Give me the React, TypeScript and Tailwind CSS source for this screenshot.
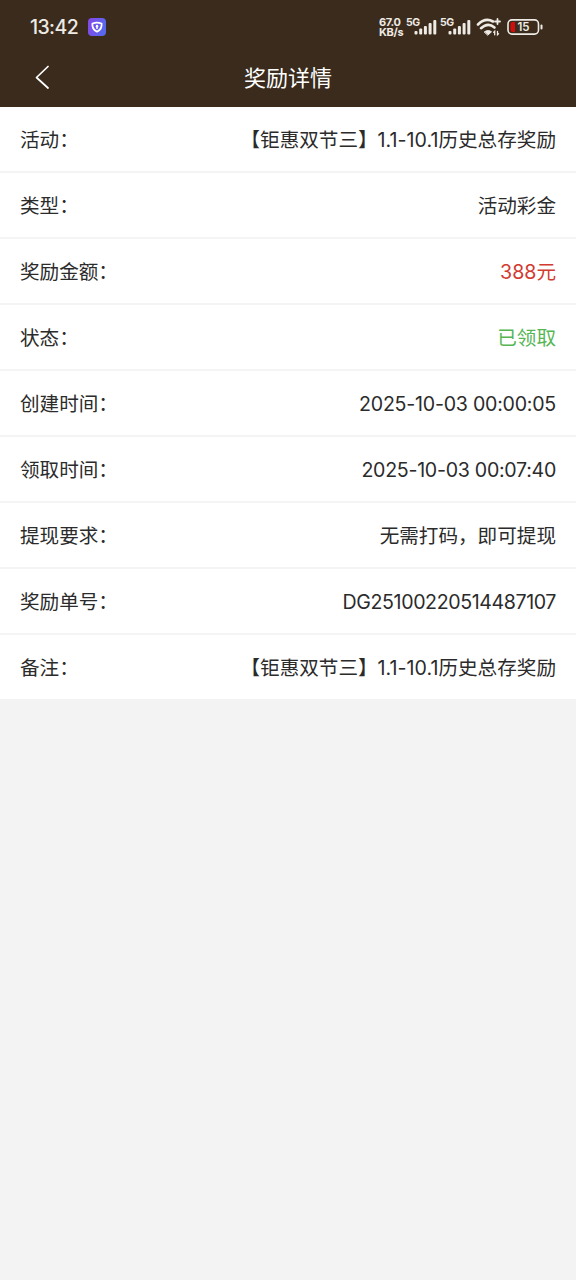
import type { ReactNode } from "react";

type Row = { label: string; value: ReactNode; tone?: string };

const promo = (
  <>
    【钜惠双节三】<span className="tracking-[0.02px]">1.1-10.1</span>历史总存奖励
  </>
);

const rows: Row[] = [
  { label: "活动：", value: promo },
  { label: "类型：", value: "活动彩金" },
  { label: "奖励金额：", value: "388元", tone: "text-[#d33a30]" },
  { label: "状态：", value: "已领取", tone: "text-[#56b654]" },
  { label: "创建时间：", value: <span className="tracking-[-0.24px]">2025-10-03 00:00:05</span> },
  { label: "领取时间：", value: <span className="tracking-[-0.28px]">2025-10-03 00:07:40</span> },
  { label: "提现要求：", value: "无需打码，即可提现" },
  { label: "奖励单号：", value: <span className="tracking-[-0.4px]">DG25100220514487107</span> },
  { label: "备注：", value: promo },
];

function Signal() {
  return (
    <svg className="h-4 w-6" viewBox="0 0 24 16" fill="#eeeae4">
      <rect x="0.5" y="12" width="3" height="3.5" rx="1" />
      <rect x="5.2" y="9.5" width="3" height="6" rx="1" />
      <rect x="9.9" y="7" width="3" height="8.5" rx="1" />
      <rect x="14.6" y="4" width="3" height="11.5" rx="1" />
      <rect x="19.3" y="1" width="3" height="14.5" rx="1" />
    </svg>
  );
}

function StatusBar() {
  return (
    <div className="flex h-[54px] items-center pl-[30px] pr-[33px] text-[#eeeae4]">
      <span className="w-[58px] pt-[2px] text-[19.5px] font-medium leading-none tracking-[-0.6px]">13:42</span>
      <svg className="size-[18px]" viewBox="0 0 18 18">
        <defs>
          <linearGradient id="badge" x1="0" y1="0" x2="1" y2="0.3">
            <stop offset="0" stopColor="#8846e8" />
            <stop offset="1" stopColor="#5868ee" />
          </linearGradient>
        </defs>
        <rect width="18" height="18" rx="4" fill="url(#badge)" />
        <path d="M9 4.600C10.600 4.600 12 5 13.600 5.500C14 9.500 12.600 12 9 13.700C5.400 12 4 9.500 4.400 5.500C6 5 7.400 4.600 9 4.600Z" fill="none" stroke="#fff" strokeWidth="1.800" strokeLinejoin="round" />
        <path d="M9 6.800a1.500 1.500 0 0 1 .7 2.700V11H8.300V9.500A1.500 1.500 0 0 1 9 6.800Z" fill="#fff" />
      </svg>
      <div className="ml-auto flex items-center">
        <p className="w-[27px] whitespace-nowrap text-[11px] font-bold leading-[10px] tracking-[-0.3px]">
          67.0
          <br />
          KB/s
        </p>
        <span className="mb-[8px] w-[8px] whitespace-nowrap text-[10.5px] font-bold leading-none tracking-[-0.4px]">5G</span>
        <Signal />
        <span className="mb-[8px] ml-[2px] w-[8px] whitespace-nowrap text-[10.5px] font-bold leading-none tracking-[-0.4px]">5G</span>
        <Signal />
        <svg className="ml-[4px] h-[20px] w-[26px]" viewBox="0 0 26 20" fill="none" stroke="#eeeae4" strokeLinecap="round">
          <path d="M2 7.500C7 2.500 12.500 2 17 4.500" strokeWidth="2.600" />
          <path d="M5 11.200C9.500 7 14.500 7 18.500 10.500" strokeWidth="2.600" />
          <path d="M8.500 14.800C10.500 13.200 13.500 13.200 15.500 14.800L12 18Z" fill="#eeeae4" strokeWidth="1" strokeLinejoin="round" />
          <path d="M19 4.500h5M21.500 2v5" strokeWidth="1.800" />
          <path d="M18.700 17.800v-3.500l-1 1M21.500 14.300v3.500l1-1" strokeWidth="1.300" />
        </svg>
        <svg className="ml-[5px] h-4 w-9" viewBox="0 0 36 16">
          <rect x="1" y="0.900" width="30.500" height="14.200" rx="4" fill="none" stroke="#eeeae4" strokeWidth="1.600" />
          <path d="M5.500 3H8v10H5.500A2 2 0 0 1 3.500 11V5a2 2 0 0 1 2-2Z" fill="#d00d08" />
          <rect x="33.500" y="5.500" width="2" height="5" rx="1" fill="#eeeae4" />
          <text x="16.500" y="12.200" textAnchor="middle" fontSize="11.500" fontWeight="600" fill="#eeeae4">15</text>
        </svg>
      </div>
    </div>
  );
}

export default function App() {
  return (
    <div lang="zh-CN" className="min-h-[1280px] w-[576px] bg-[#f3f3f3] font-['Inter','Noto_Sans_CJK_SC',sans-serif]">
      <header className="h-[107px] bg-[#3a2b1c]">
        <StatusBar />
        <div className="grid h-[46px] grid-cols-[84px_1fr_84px] items-center">
          <svg className="ml-[34px] h-6 w-4" viewBox="0 0 16 24" fill="none" stroke="#fff" strokeWidth="1.700" strokeLinecap="round" strokeLinejoin="round">
            <path d="M14 1.500L2.500 12.500L14 23" />
          </svg>
          <h1 className="pt-px text-center text-[22px] leading-none text-white">奖励详情</h1>
        </div>
      </header>
      <main className="divide-y-2 divide-[#f4f4f4] bg-white text-[19.6px] text-[#2b2b2b]">
        {rows.map((row) => (
          <div key={row.label} className="flex h-[66px] items-center justify-between px-5 pt-[3px] leading-none last:h-[64px]">
            <span>{row.label}</span>
            <span className={row.tone}>{row.value}</span>
          </div>
        ))}
      </main>
    </div>
  );
}
